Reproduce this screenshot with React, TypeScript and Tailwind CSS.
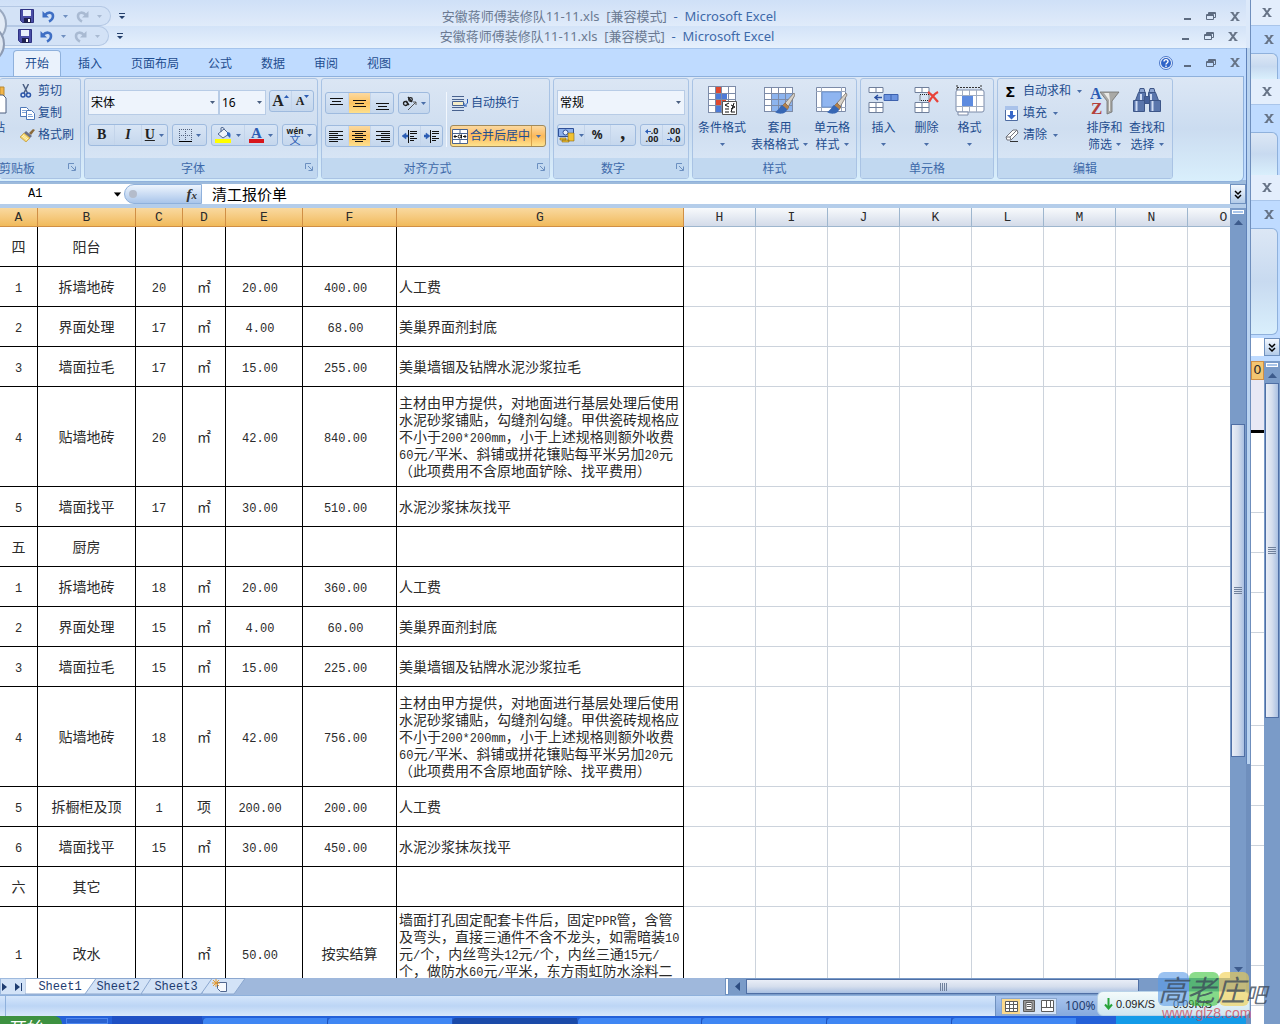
import React from 'react';

type Row = {
  no: string;
  name: string;
  qty?: string;
  unit?: string;
  price?: string;
  total?: string;
  note?: string[];
  height?: string;
};

const TILE_NOTE = [
  '主材由甲方提供，对地面进行基层处理后使用',
  '水泥砂浆铺贴，勾缝剂勾缝。甲供瓷砖规格应',
  '不小于200*200mm，小于上述规格则额外收费',
  '60元/平米、斜铺或拼花镶贴每平米另加20元',
  '（此项费用不含原地面铲除、找平费用）',
];

const ROWS: Row[] = [
  { no: '四', name: '阳台' },
  { no: '1', name: '拆墙地砖', qty: '20', unit: '㎡', price: '20.00', total: '400.00', note: ['人工费'] },
  { no: '2', name: '界面处理', qty: '17', unit: '㎡', price: '4.00', total: '68.00', note: ['美巢界面剂封底'] },
  { no: '3', name: '墙面拉毛', qty: '17', unit: '㎡', price: '15.00', total: '255.00', note: ['美巢墙锢及钻牌水泥沙浆拉毛'] },
  { no: '4', name: '贴墙地砖', qty: '20', unit: '㎡', price: '42.00', total: '840.00', note: TILE_NOTE, height: 'h-[100px]' },
  { no: '5', name: '墙面找平', qty: '17', unit: '㎡', price: '30.00', total: '510.00', note: ['水泥沙浆抹灰找平'] },
  { no: '五', name: '厨房' },
  { no: '1', name: '拆墙地砖', qty: '18', unit: '㎡', price: '20.00', total: '360.00', note: ['人工费'] },
  { no: '2', name: '界面处理', qty: '15', unit: '㎡', price: '4.00', total: '60.00', note: ['美巢界面剂封底'] },
  { no: '3', name: '墙面拉毛', qty: '15', unit: '㎡', price: '15.00', total: '225.00', note: ['美巢墙锢及钻牌水泥沙浆拉毛'] },
  { no: '4', name: '贴墙地砖', qty: '18', unit: '㎡', price: '42.00', total: '756.00', note: TILE_NOTE, height: 'h-[100px]' },
  { no: '5', name: '拆橱柜及顶', qty: '1', unit: '项', price: '200.00', total: '200.00', note: ['人工费'] },
  { no: '6', name: '墙面找平', qty: '15', unit: '㎡', price: '30.00', total: '450.00', note: ['水泥沙浆抹灰找平'] },
  { no: '六', name: '其它' },
  {
    no: '1',
    name: '改水',
    unit: '㎡',
    price: '50.00',
    total: '按实结算',
    note: [
      '墙面打孔固定配套卡件后，固定PPR管，含管',
      '及弯头，直接三通件不含不龙头，如需暗装10',
      '元/个，内丝弯头12元/个，内丝三通15元/',
      '个，做防水60元/平米，东方雨虹防水涂料二',
      '遍',
    ],
    height: 'h-[94px]',
  },
];

const COLUMNS = [
  { key: 'A', width: 'w-[38px]' },
  { key: 'B', width: 'w-[98px]' },
  { key: 'C', width: 'w-[47px]' },
  { key: 'D', width: 'w-[43px]' },
  { key: 'E', width: 'w-[77px]' },
  { key: 'F', width: 'w-[94px]' },
  { key: 'G', width: 'w-[287px]' },
  ...['H', 'I', 'J', 'K', 'L', 'M', 'N', 'O'].map(key => ({ key, width: 'w-[72px]' })),
];

const EMPTY_COLUMNS = COLUMNS.slice(7);

// ASCII runs use a narrow monospace so they take half a Chinese character each
const Mixed: React.FC<{ text?: string }> = ({ text = '' }) => (
  <>
    {text.split(/([\x20-\x7e]+)/).map((part, i) =>
      i % 2 ? <span key={i} className="font-['Liberation_Mono',monospace] text-[12px] leading-none">{part}</span> : part
    )}
  </>
);

const Caret: React.FC<{ className?: string }> = ({ className = 'text-[#4a6ea8]' }) => (
  <svg className={`shrink-0 ${className}`} width="5" height="3" viewBox="0 0 5 3" fill="currentColor"><path d="M0 0h5L2.5 3z" /></svg>
);

/* ---------- title bars ---------- */

const SaveIcon = () => (
  <svg width="14" height="14" viewBox="0 0 14 14">
    <path d="M0.5 0.5h13v13h-11l-2-2z" fill="#4a4ea6" stroke="#2f3282" />
    <path d="M3 1h8v6H3z" fill="#e8effb" />
    <path d="M4 9h7v5H4z" fill="#1f2150" />
    <path d="M8 10h2v3H8z" fill="#fff" />
  </svg>
);

const UndoIcon: React.FC<{ className: string }> = ({ className }) => (
  <svg className={className} width="13" height="13" viewBox="0 0 13 13" fill="none" stroke="currentColor">
    <path d="M3 5C6 1.500 11 2 11 6c0 3-2 4.500-4 5.500" strokeWidth="2.600" />
    <path d="M0.500 1v6.500H7z" fill="currentColor" stroke="none" />
  </svg>
);

const CloseGlyph = () => (
  <svg width="10" height="9" viewBox="0 0 10 9" fill="none" stroke="#667386"><path d="M2 0.500l6 8M8 0.500l-6 8" strokeWidth="2" /><path d="M.5 .5h3M6.500 .5h3M.5 8.500h3M6.500 8.500h3" /></svg>
);

const WindowButtons = () => (
  <div className="flex items-center gap-3.5 text-[#5d6b80]">
    <button aria-label="最小化" className="pt-1.5"><svg width="9" height="4" viewBox="0 0 9 4"><path d="M1 1h7v2H1z" fill="currentColor" /></svg></button>
    <button aria-label="还原">
      <svg width="10" height="8" viewBox="0 0 10 8" fill="none" stroke="currentColor"><path d="M2.500 2V.5h7v5H8M0.500 2.500h7v5h-7zM0.500 3.500h7M2.500 1.500h7" /></svg>
    </button>
    <button aria-label="关闭"><CloseGlyph /></button>
  </div>
);

const TitleBar: React.FC<{ className: string; shift?: string }> = ({ className, shift = '' }) => (
  <header className={`grid shrink-0 grid-cols-[1fr_auto_1fr] items-center ${className}`}>
    <div className="flex h-[20px] items-center gap-2">
      <div className={`flex h-full items-center rounded-r-full border border-l-0 border-[#b4c8e4] bg-[#d3e2f6] pl-5 ${shift || 'w-[111px]'}`}>
        <button aria-label="保存"><SaveIcon /></button>
        <button aria-label="撤消" className="ml-2"><UndoIcon className="text-[#3f6fc4]" /></button>
        <Caret className="ml-2 text-[#6f8fc0]" />
        <button aria-label="恢复" className="ml-2"><UndoIcon className="-scale-x-100 text-[#a9bad2]" /></button>
        <Caret className="ml-2 text-[#a9bad2]" />
      </div>
      <button aria-label="自定义快速访问工具栏">
        <svg width="6" height="7" viewBox="0 0 6 7" fill="#243f6b"><path d="M0 0h6v1H0zM0 3h6L3 6z" /></svg>
      </button>
    </div>
    <h1 className="whitespace-pre pr-7 text-[13px] text-[#6b7a92]">
      安徽蒋师傅装修队11-11.xls  [兼容模式] <span className="text-[#3e6aaa]"> -  Microsoft Excel</span>
    </h1>
    <div className="flex justify-end pr-1.5"><WindowButtons /></div>
  </header>
);

/* ---------- ribbon ---------- */

const Group: React.FC<{ label: string; className: string; labelClass?: string; launcher?: boolean; children: React.ReactNode }> = ({ label, className, labelClass = '', launcher, children }) => (
  <section className={`flex h-[101px] shrink-0 flex-col overflow-hidden rounded-[3px] border border-[#a9c3e4] bg-linear-to-b from-[#dbe6f4] via-[#cfdef0] to-[#dce9f8] ${className}`}>
    <div className="min-h-0 flex-1">{children}</div>
    <div className="flex h-5 items-center bg-[#c1d8f0] px-1 pt-px text-[#3e6aaa]">
      <h2 className={`flex-1 whitespace-nowrap ${labelClass || 'text-center'}`}>{label}</h2>
      {launcher && (
        <button aria-label={`${label}设置`} className="-ml-2 pb-1">
          <svg width="8" height="8" viewBox="0 0 8 8" fill="none" stroke="#6b8fc0"><path d="M0.500 6V.5H6M3 3l4 4M7.500 3.500v4h-4" /></svg>
        </button>
      )}
    </div>
  </section>
);

const ButtonSet: React.FC<{ className: string; children: React.ReactNode }> = ({ className, children }) => (
  <div className={`flex h-[22px] shrink-0 items-stretch divide-x divide-[#c3d4ea] rounded-[3px] border border-[#9ebade] bg-linear-to-b from-[#d8e5f5] to-[#c5d7ed] ${className}`}>{children}</div>
);

const Tool: React.FC<{ label: string; active?: boolean; arrow?: boolean; children: React.ReactNode }> = ({ label, active, arrow, children }) => (
  <button aria-label={label} className={`flex flex-1 items-center justify-center gap-1 ${active ? 'bg-linear-to-b from-[#fbd9a0] via-[#fcc35f] to-[#fde08e]' : ''}`}>
    {children}
    {arrow && <Caret />}
  </button>
);

const Combo: React.FC<{ label: string; value: string; className: string }> = ({ label, value, className }) => (
  <div className={`relative h-[25px] shrink-0 ${className}`}>
    <select aria-label={label} className="h-full w-full appearance-none border border-[#b8cce6] bg-[#eef4fc] pl-[2px] text-[12px] text-black">
      <option>{value}</option>
    </select>
    <Caret className="pointer-events-none absolute right-1 top-[11px] text-[#4a5f80]" />
  </div>
);

const Lines: React.FC<{ d: string; arrow?: string }> = ({ d, arrow }) => (
  <svg width="15" height="13" viewBox="0 0 15 13" fill="none" stroke="#111">
    <path d={d} />
    {arrow && <path d={arrow} fill="#2b5cb4" stroke="#2b5cb4" strokeWidth=".5" />}
  </svg>
);

const SmallCommand: React.FC<{ label: string; arrow?: boolean; children: React.ReactNode }> = ({ label, arrow, children }) => (
  <button className="flex h-[22px] items-center whitespace-nowrap">
    <span className="flex w-[18px] items-center">{children}</span>
    {label}
    {arrow && <Caret className="ml-1.5 text-[#4a6ea8]" />}
  </button>
);

const BigCommand: React.FC<{ lines: string[]; className: string; children: React.ReactNode }> = ({ lines, className, children }) => (
  <button className={`flex flex-col items-center whitespace-nowrap leading-[17px] ${className}`}>
    <span className="flex h-[34px] items-center">{children}</span>
    <span className="mt-[2px]">{lines[0]}</span>
    <span className="flex h-[17px] items-center gap-1">{lines[1]}<Caret /></span>
  </button>
);

const CutIcon = () => (
  <svg width="12" height="14" viewBox="0 0 12 14" fill="none">
    <path d="M3 0l4.500 9M8.500 0L4 9" stroke="#4d6185" strokeWidth="1.500" />
    <circle cx="3" cy="11" r="2" stroke="#2b55a8" strokeWidth="1.500" />
    <circle cx="8.500" cy="11" r="2" stroke="#2b55a8" strokeWidth="1.500" />
  </svg>
);

const CopyIcon = () => (
  <svg width="15" height="13" viewBox="0 0 15 13" fill="#fff" stroke="#4d78b8">
    <path d="M0.500 0.500h6l2 2v7h-8z" /><path d="M6.500 3.500h5l3 3v6h-8z" /><path d="M2 3.500h4M2 5.500h4M8 7.500h4M8 9.500h5" stroke="#7fa5d8" />
  </svg>
);

const BrushIcon = () => (
  <svg width="16" height="13" viewBox="0 0 16 13">
    <path d="M9 4l4-4 2 1-4 5z" fill="#8a6a3a" /><path d="M6 2l6 5-2 2-6-5z" fill="#6a7088" /><path d="M4 4l6 5-4 4-6-5z" fill="#f3d56c" stroke="#b88a28" strokeWidth=".6" />
    <path d="M3 6l5 4M2 7l5 4" stroke="#fff6c8" />
  </svg>
);

const PaintBrush: React.FC = () => (
  <g>
    <path d="M30 7L21 17l3 4 7-12z" fill="#d8d2c8" stroke="#77706a" strokeWidth=".8" />
    <path d="M21 17l4 4-2 3-5-4z" fill="#b5824a" stroke="#7d5528" strokeWidth=".5" />
    <path d="M18 19c-2 1-2 4-7 7 4 3 12 2 12-3z" fill="#3767b4" />
  </g>
);

const ConditionalIcon = () => (
  <svg width="31" height="30" viewBox="0 0 31 30">
    <path d="M1 1h27v26H1z" fill="#fff" />
    <path d="M8 1h6v7H8zM8 14h11v6H8z" fill="#e0492f" /><path d="M8 8h12v6H8zM8 20h6v7H8z" fill="#4d7bd8" />
    <path d="M1.500 1v26M8.500 1v26M14.500 1v26M21.500 1v26M28.500 1v26M1 1.500h27M1 8.500h27M1 14.500h27M1 20.500h27M1 27.500h27" stroke="#7c8ba8" />
    <path d="M15.500 16.500h14v13h-14z" fill="#fff" stroke="#555" />
    <path d="M22 18l-4 2 4 2M18 24h4M24 20l4 2-4 2M24 27h4M18 27h4M27 18l-3 9" fill="none" stroke="#111" />
  </svg>
);

const TableFormatIcon = () => (
  <svg width="31" height="29" viewBox="0 0 31 29">
    <path d="M1 1h28v25H1z" fill="#fff" /><path d="M8 8h21v18H8z" fill="#8db4ee" />
    <path d="M.5 1v25M7.500 1v25M14.500 1v25M21.500 1v25M28.500 1v25M0 1.500h29M0 7.500h29M0 13.500h29M0 19.500h29M0 25.500h29" stroke="#7c8ba8" />
    <PaintBrush />
  </svg>
);

const CellStyleIcon = () => (
  <svg width="32" height="29" viewBox="0 0 32 29">
    <path d="M.5 1.500h29v24H.5z" fill="#fff" stroke="#7c8ba8" /><path d="M5.500 1v24M25.500 1v24M0 5.500h30M0 21.500h30" stroke="#9aa7bd" />
    <path d="M6 6h19v15H6z" fill="#8fb5f0" stroke="#6f95d0" />
    <PaintBrush />
  </svg>
);

const InsertIcon = () => (
  <svg width="31" height="28" viewBox="0 0 31 28" fill="#fff" stroke="#6f7f9b">
    <path d="M1 1.500h14v5H1zM1 16.500h14v10H1zM8 1.500v5M8 16.500v10M1 21.500h14" />
    <path d="M16 8.500h14v6H16zM23 8.500v6" fill="#6c94e0" stroke="#3d62ae" />
    <path d="M7 11.500h7M10 9l-3 2.500L10 14" fill="none" stroke="#2b4fa0" strokeWidth="1.500" />
  </svg>
);

const DeleteIcon = () => (
  <svg width="26" height="28" viewBox="0 0 26 28" fill="#fff" stroke="#6f7f9b">
    <path d="M1 1.500h14v5H1zM1 16.500h14v10H1zM8 1.500v5M8 16.500v10M1 21.500h14" />
    <path d="M6 8.500h9v6H6z" fill="none" strokeDasharray="1 1" stroke="#222" />
    <path d="M14 6c3 2 7 6 10 10M24 6c-4 2-7 6-9 10" fill="none" stroke="#e8433a" strokeWidth="2.200" />
  </svg>
);

const FormatIcon = () => (
  <svg width="30" height="31" viewBox="0 0 30 31">
    <path d="M2 2.500h24M2 0v5M26 0v5" stroke="#333" strokeDasharray="2 1" />
    <rect x="1" y="5" width="28" height="22" rx="2" fill="#fff" stroke="#7c8ba8" />
    <path d="M7.500 5v22M14.500 5v22M21.500 5v22M1 10.500h28M1 21.500h28" stroke="#a2aec2" />
    <path d="M7 11h11v10H7z" fill="#5d8be0" /><path d="M3 27h10v3H3z" fill="#fff" stroke="#7c8ba8" />
  </svg>
);

const SortFilterIcon = () => (
  <svg width="30" height="29" viewBox="0 0 30 29">
    <path d="M10 6h19l-7 9v11l-5 2V15z" fill="#a9a9a6" stroke="#6f6f6c" strokeWidth=".8" /><path d="M14 7h5l1 7v11h-1V14z" fill="#e9e9e6" />
    <text x="0" y="13" fontFamily="Liberation Serif, serif" fontWeight="bold" fontSize="16" fill="#2b5cb4">A</text>
    <text x="1" y="28" fontFamily="Liberation Serif, serif" fontWeight="bold" fontSize="17" fill="#b3403a">Z</text>
  </svg>
);

const BinocularsIcon = () => (
  <svg width="28" height="26" viewBox="0 0 28 26" fill="#5a76ac" stroke="#3d5688">
    <path d="M5.500 5.500h7v8h-10zM15.500 5.500h7l3 8h-10z" />
    <path d="M7 1.500h4l1 4H6zM17 1.500h4l1 4h-6z" fill="#8ea6d2" />
    <path d="M.5 13.500h11v11H.5zM16.500 13.500h11v11h-11z" /><path d="M11.500 9.500h5v7h-5z" fill="#44609a" />
    <path d="M3.500 14v10M19.500 14v10M8 7v6M18 7v6" stroke="#cfdcf4" strokeWidth="2" />
  </svg>
);

const MergeIcon = () => (
  <svg width="16" height="15" viewBox="0 0 16 15" fill="#fff" stroke="#48628f">
    <path d="M.5.5h15v14H.5zM0 4.500h16M0 10.500h16M8 0v4M8 11v4" />
    <path d="M2 7.500h3M11 7.500h3M3.500 6L2 7.500 3.500 9M12.500 6L14 7.500 12.500 9" fill="none" stroke="#111" />
    <circle cx="7.500" cy="7.500" r="1.500" fill="none" stroke="#111" /><path d="M9.500 5.500v4" stroke="#111" />
  </svg>
);

const BG = 'font-[\'Liberation_Serif\',serif] font-bold text-[#222]';

const Ribbon = () => (
  <div className="flex h-[108px] shrink-0 items-start border-b-4 border-[#9dbbdc] bg-[#bfdbff] pr-0.5">
    <div className="flex h-[106px] w-full gap-[3px] overflow-hidden rounded-br-md border border-l-0 border-[#8fb1dc] bg-linear-to-b from-[#dce7f5] via-[#cbdcf0] to-[#d9effc] pt-px">
      <Group label="剪贴板" className="w-[81px] border-l-0" labelClass="-ml-[5px] text-left" launcher>
        <div className="flex pt-px">
          <div className="flex h-14 w-[20px] flex-col justify-between pt-[6px]">
            <svg width="7" height="28" viewBox="0 0 7 28"><path d="M0 1h4v10H0z" fill="#f4b64a" stroke="#b98933" /><path d="M-2 9h5l3 3v15h-8z" fill="#fff" stroke="#4d5f80" /></svg>
            <span className="-ml-[7px] leading-4">贴</span>
          </div>
          <div className="flex flex-col">
            <SmallCommand label="剪切"><CutIcon /></SmallCommand>
            <SmallCommand label="复制"><CopyIcon /></SmallCommand>
            <SmallCommand label="格式刷"><BrushIcon /></SmallCommand>
          </div>
        </div>
      </Group>

      <Group label="字体" className="w-[234px]" labelClass="pr-4 text-center" launcher>
        <div className="flex flex-col gap-[9px] px-[3px] pt-[11px]">
          <div className="flex">
            <Combo label="字体" value="宋体" className="w-[131px]" />
            <Combo label="字号" value="16" className="w-[47px]" />
            <ButtonSet className="ml-[3px] w-[45px]">
              <Tool label="增大字号"><span className={`${BG} -mr-1 text-[16px]`}>A</span><Caret className="mb-2.5 rotate-180 text-[#2b5cb4]" /></Tool>
              <Tool label="减小字号"><span className={`${BG} -mr-1 text-[12px]`}>A</span><Caret className="mb-2.5 text-[#2b5cb4]" /></Tool>
            </ButtonSet>
          </div>
          <div className="flex gap-1">
            <ButtonSet className="w-[80px]">
              <Tool label="加粗"><span className={`${BG} text-[14px]`}>B</span></Tool>
              <Tool label="倾斜"><span className={`${BG} text-[14px] italic`}>I</span></Tool>
              <Tool label="下划线" arrow><span className={`${BG} text-[14px] underline`}>U</span></Tool>
            </ButtonSet>
            <ButtonSet className="w-[35px]">
              <Tool label="边框" arrow>
                <svg width="13" height="13" viewBox="0 0 13 13" fill="none" stroke="#52617d"><path d="M.5 0v12M6.500 0v12M12.500 0v12M0 .5h13M0 6.500h13" strokeDasharray="1 1" /><path d="M0 12.500h13" stroke="#000" /></svg>
              </Tool>
            </ButtonSet>
            <ButtonSet className="w-[67px]">
              <Tool label="填充颜色" arrow>
                <svg width="17" height="16" viewBox="0 0 17 16"><path d="M0 12h16v4H0z" fill="#ffff00" /><path d="M3 7l6-5 5 5-6 4z" fill="#eef3fb" stroke="#51678f" /><path d="M6 5V1c0-1 3-1 3 1" fill="none" stroke="#51678f" /><path d="M12 5c4 0 4 3 3 6l-3-3z" fill="#2f66c0" /></svg>
              </Tool>
              <Tool label="字体颜色" arrow>
                <span className="flex flex-col items-center border-b-4 border-[#d8161c] px-[2px] font-['Liberation_Serif',serif] text-[15px] font-bold leading-3 text-[#2b5cb4]">A</span>
              </Tool>
            </ButtonSet>
            <ButtonSet className="w-[35px]">
              <Tool label="拼音" arrow><span className="flex flex-col items-center leading-[9px]"><b className="text-[8px] text-[#222]">wén</b><span className="text-[11px] text-[#2b5cb4]">文</span></span></Tool>
            </ButtonSet>
          </div>
        </div>
      </Group>

      <Group label="对齐方式" className="w-[229px]" labelClass="pr-4 text-center" launcher>
        <div className="flex pt-[13px] pl-[3px]">
          <div className="flex flex-col gap-[11px] border-r border-[#f2f7fd] pr-[3px]">
            <div className="flex gap-1">
              <ButtonSet className="w-[69px]">
                <Tool label="顶端对齐"><Lines d="M1 1.500h13M3 4.500h9M1 7.500h13" /></Tool>
                <Tool label="垂直居中" active><Lines d="M1 3.500h13M3 6.500h9M1 9.500h13" /></Tool>
                <Tool label="底端对齐"><Lines d="M1 6.500h13M3 9.500h9M1 12.500h13" /></Tool>
              </ButtonSet>
              <ButtonSet className="w-[32px]">
                <Tool label="方向" arrow>
                  <svg width="15" height="15" viewBox="0 0 15 15" fill="none" stroke="#222" strokeWidth="1.300"><circle cx="3.500" cy="7.500" r="2" /><path d="M4 5l3 4M6 1l4 5" /><circle cx="8.500" cy="3.500" r="1.800" /><path d="M6 14l8-8M14 9V6h-3" stroke="#555" strokeWidth="1" /></svg>
                </Tool>
              </ButtonSet>
            </div>
            <div className="flex gap-1">
              <ButtonSet className="w-[69px]">
                <Tool label="文本左对齐"><Lines d="M0 1.500h14M0 3.500h9M0 5.500h14M0 7.500h9M0 9.500h14M0 11.500h9" /></Tool>
                <Tool label="居中" active><Lines d="M0 1.500h14M3 3.500h8M0 5.500h14M3 7.500h8M0 9.500h14M3 11.500h8" /></Tool>
                <Tool label="文本右对齐"><Lines d="M1 1.500h14M6 3.500h9M1 5.500h14M6 7.500h9M1 9.500h14M6 11.500h9" /></Tool>
              </ButtonSet>
              <ButtonSet className="w-[45px]">
                <Tool label="减少缩进量"><Lines d="M6.500 0v13M8 1.500h7M8 3.500h7M8 6.500h4M8 8.500h7M8 10.500h4" arrow="M0 6l4-3v2h2v2H4v2z" /></Tool>
                <Tool label="增加缩进量"><Lines d="M6.500 0v13M8 1.500h7M8 3.500h7M8 6.500h4M8 8.500h7M8 10.500h4" arrow="M6 6L2 3v2H0v2h2v2z" /></Tool>
              </ButtonSet>
            </div>
          </div>
          <div className="flex flex-col gap-[11px] pl-[3px]">
            <button className="flex h-[22px] items-center gap-[3px] pl-[2px]">
              <svg width="16" height="15" viewBox="0 0 16 15" fill="none" stroke="#48628f"><path d="M0 .5h12M0 3.500h12M0 11.500h12M0 14.500h12" /><path d="M.5 5.500h11v4H.5z" fill="#f5edc8" /><path d="M15.500 3v4l-3 3M12 7v3h3" stroke="#2b5cb4" /></svg>
              自动换行
            </button>
            <button className="flex h-[22px] w-[96px] items-center whitespace-nowrap rounded-[3px] border border-[#a08a5c] bg-linear-to-b from-[#fbd9a0] via-[#fcb95a] to-[#fde38e] pl-px">
              <MergeIcon />
              <span className="ml-[2px] mr-px">合并后居中</span>
              <span className="flex h-full flex-1 items-center justify-center border-l border-[#d8a24c]"><Caret /></span>
            </button>
          </div>
        </div>
      </Group>

      <Group label="数字" className="w-[136px]" labelClass="pr-4 text-center" launcher>
        <div className="flex flex-col gap-[9px] px-[3px] pt-[11px]">
          <Combo label="数字格式" value="常规" className="w-[128px]" />
          <div className="flex gap-1">
            <ButtonSet className="w-[79px]">
              <Tool label="会计数字格式" arrow>
                <svg width="17" height="16" viewBox="0 0 17 16"><path d="M.5 1.500h15v8H.5z" fill="#8db0ea" stroke="#2f5097" /><circle cx="7.500" cy="5.500" r="2.500" fill="#e8f0fc" stroke="#2f5097" /><path d="M2 11h6v2H2zM4 13h7v2H4zM10 6h6v8h-6z" fill="#f1c232" stroke="#8a6914" strokeWidth=".6" /></svg>
              </Tool>
              <Tool label="百分比样式"><span className="text-[12px] font-bold text-[#222]">%</span></Tool>
              <Tool label="千位分隔样式"><span className={`${BG} -mt-1.5 text-[20px]`}>,</span></Tool>
            </ButtonSet>
            <ButtonSet className="w-[45px]">
              <Tool label="增加小数位数">
                <span className="flex flex-col items-end text-[9px] font-bold leading-[8px] text-[#222]">
                  <span className="flex items-center"><svg width="6" height="5" viewBox="0 0 6 5" fill="#2b5cb4"><path d="M0 2.500L3 0v2h3v1H3v2z" /></svg>.0</span>
                  <span>.00</span>
                </span>
              </Tool>
              <Tool label="减少小数位数">
                <span className="flex flex-col items-end text-[9px] font-bold leading-[8px] text-[#222]">
                  <span>.00</span>
                  <span className="flex items-center"><svg width="6" height="5" viewBox="0 0 6 5" fill="#2b5cb4"><path d="M6 2.500L3 0v2H0v1h3v2z" /></svg>.0</span>
                </span>
              </Tool>
            </ButtonSet>
          </div>
        </div>
      </Group>

      <Group label="样式" className="w-[165px]">
        <div className="flex pt-1">
          <BigCommand lines={['条件格式', '']} className="w-[58px]"><ConditionalIcon /></BigCommand>
          <BigCommand lines={['套用', '表格格式']} className="w-[57px]"><TableFormatIcon /></BigCommand>
          <BigCommand lines={['单元格', '样式']} className="w-[48px]"><CellStyleIcon /></BigCommand>
        </div>
      </Group>

      <Group label="单元格" className="w-[134px]">
        <div className="flex pt-1 pl-px">
          <BigCommand lines={['插入', '']} className="w-[43px]"><InsertIcon /></BigCommand>
          <BigCommand lines={['删除', '']} className="w-[43px]"><DeleteIcon /></BigCommand>
          <BigCommand lines={['格式', '']} className="w-[43px]"><FormatIcon /></BigCommand>
        </div>
      </Group>

      <Group label="编辑" className="w-[176px]">
        <div className="flex pl-[7px]">
          <div className="flex w-[78px] flex-col pt-px">
            <SmallCommand label="自动求和" arrow><b className="pl-px text-[15px] text-black">Σ</b></SmallCommand>
            <SmallCommand label="填充" arrow>
              <svg width="13" height="15" viewBox="0 0 13 15"><path d="M.5.500h12v14H.5z" fill="#fff" stroke="#4d6aa0" /><path d="M0 0h13v4H0z" fill="#a9c2ea" /><path d="M5 5h3v4h3l-4.500 4.500L2 9h3z" fill="#3767c8" /></svg>
            </SmallCommand>
            <SmallCommand label="清除" arrow>
              <svg width="14" height="13" viewBox="0 0 14 13"><path d="M1 8l7-7h4l1 3-7 7H2z" fill="#fff" stroke="#70737c" /><path d="M1 8h4l1 3M5 8l7-7" fill="none" stroke="#70737c" /><path d="M5 12.500h8" stroke="#333" /></svg>
            </SmallCommand>
          </div>
          <div className="flex pt-1">
            <BigCommand lines={['排序和', '筛选']} className="w-[43px]"><SortFilterIcon /></BigCommand>
            <BigCommand lines={['查找和', '选择']} className="w-[42px]"><BinocularsIcon /></BigCommand>
          </div>
        </div>
      </Group>
    </div>
  </div>
);

const TABS = ['开始', '插入', '页面布局', '公式', '数据', '审阅', '视图'];

const TabRow = () => (
  <nav className="flex h-7 shrink-0 items-end justify-between border-t border-[#a5c4ec] bg-[#bfdbff]">
    <div className="flex gap-[5px] pl-[13px]">
      {TABS.map((tab, i) => (
        <button
          key={tab}
          className={`h-[26px] rounded-t-[4px] border border-b-0 px-[11px] ${i === 0 ? 'border-[#8fb1dc] bg-[#eaf2fc]' : 'border-transparent'}`}
        >
          {tab}
        </button>
      ))}
    </div>
    <div className="flex h-full items-center gap-2.5 pr-1.5">
      <button aria-label="帮助">
        <svg width="14" height="14" viewBox="0 0 14 14" fill="none"><circle cx="7" cy="7" r="6.500" fill="#e7f0fd" stroke="#4d78c8" /><circle cx="7" cy="7" r="5" fill="#2f64c8" /><path d="M5 5.500c0-2.500 4-2.500 4 0C9 7 7 7 7 8.500M7 9.500v1.500" stroke="#fff" strokeWidth="1.400" /></svg>
      </button>
      <WindowButtons />
    </div>
  </nav>
);

const ExpandButton = () => (
  <button aria-label="展开" className="flex w-4 shrink-0 items-center justify-center border border-[#6f91bf] bg-linear-to-b from-[#f3f8fe] to-[#b3cbe8]">
    <svg width="8" height="9" viewBox="0 0 8 9" fill="none" stroke="#000" strokeWidth="1.500"><path d="M1 1l3 3 3-3M1 5l3 3 3-3" /></svg>
  </button>
);

const FormulaBar = () => (
  <div className="flex h-6 shrink-0 border-b-4 border-[#b4cdea] bg-white">
    <label className="flex w-[124px] items-center justify-between pr-1">
      <input aria-label="名称框" defaultValue="A1" className="w-24 pl-7 font-['Liberation_Mono',monospace] text-[12px] text-black outline-none" />
      <Caret className="scale-150 text-black" />
    </label>
    <div className="flex w-[78px] items-center justify-between rounded-l-full border border-[#8fb1dc] bg-linear-to-b from-[#eef5fd] to-[#a9c5ea] pr-1">
      <span className="ml-1 size-2 rounded-full bg-[#b4bccb]" />
      <button aria-label="插入函数" className="font-['Liberation_Serif',serif] text-[15px] italic leading-4 text-[#333]"><b>f</b><span className="text-[11px] font-bold">x</span></button>
    </div>
    <input aria-label="编辑栏" defaultValue="清工报价单" className="min-w-0 flex-1 pl-2.5 text-[15px] leading-5 text-black outline-none" />
    <ExpandButton />
  </div>
);

/* ---------- sheet ---------- */

const Grip: React.FC<{ className?: string }> = ({ className = '' }) => (
  <svg className={className} width="8" height="8" viewBox="0 0 8 8" stroke="#70819c"><path d="M0 .5h8M0 2.500h8M0 4.500h8M0 6.500h8" /></svg>
);

const UpArrow = () => (
  <svg className="shrink-0" width="9" height="5" viewBox="0 0 9 5" fill="#3d5b8c"><path d="M0 5h9L4.500 0z" /></svg>
);

const THUMB = 'flex items-center justify-center border border-[#4f6fa5] from-[#e9eef7] via-[#d5deed] to-[#a9c0e2]';

const VerticalScroll = () => (
  <div className="flex w-4 shrink-0 flex-col items-center bg-[#7a9bc8] pt-0.5">
    <div className="h-1 w-3 shrink-0 border border-white bg-[#a9c5ea]" />
    <div className="flex h-4 shrink-0 items-center"><UpArrow /></div>
    <div className="flex-[195]" />
    <div className={`${THUMB} w-3.5 flex-[333] bg-linear-to-r`}><Grip /></div>
    <div className="flex-[206]" />
    <div className="flex h-4 shrink-0 rotate-180 items-center"><UpArrow /></div>
  </div>
);

const cell = 'border-r border-b border-black p-0';

const Sheet = () => (
  <div className="flex min-h-0 flex-1">
    <div className="min-w-0 flex-1 overflow-hidden bg-white">
      <table className="w-[1260px] table-fixed border-separate border-spacing-0 whitespace-nowrap text-center text-[14px] leading-[17px] text-[#2b2b2b]">
        <colgroup>
          {COLUMNS.map(c => <col key={c.key} className={c.width} />)}
        </colgroup>
        <thead>
          <tr className="h-[19px]">
            {COLUMNS.map((c, i) => (
              <th
                key={c.key}
                className={`border-r border-b p-0 font-['Liberation_Mono',monospace] text-[13px] font-normal text-[#2b2b2b] ${
                  i < 7 ? 'border-[#d08f45] bg-linear-to-b from-[#f9d99f] to-[#f1ba5a]' : 'border-[#9eb6ce] bg-linear-to-b from-[#f8fafc] to-[#d3dbe9]'
                }`}
              >
                {c.key}
              </th>
            ))}
          </tr>
        </thead>
        <tbody>
          {ROWS.map((row, i) => (
            <tr key={i} className={row.height ?? 'h-10'}>
              <td className={cell}><Mixed text={row.no} /></td>
              <td className={cell}>{row.name}</td>
              <td className={cell}><Mixed text={row.qty} /></td>
              <td className={cell}>{row.unit}</td>
              <td className={`${cell} pr-2`}><Mixed text={row.price} /></td>
              <td className={`${cell} ${row.total === '按实结算' ? '' : 'pr-2'}`}><Mixed text={row.total} /></td>
              <td className={`${cell} pl-0.5 text-left`}>
                {row.note?.map(line => <div key={line} className="h-[17px]"><Mixed text={line} /></div>)}
              </td>
              {EMPTY_COLUMNS.map(c => <td key={c.key} className="border-r border-b border-[#ccd3dc] p-0" />)}
            </tr>
          ))}
        </tbody>
      </table>
    </div>
    <VerticalScroll />
  </div>
);

const SheetTab: React.FC<{ label: string; active?: boolean }> = ({ label, active }) => (
  <button className={`relative h-full w-[58px] font-['Liberation_Mono',monospace] text-[12px] text-[#1e3c70] ${active ? 'z-10' : ''}`}>
    <svg className="absolute -left-1 top-0" width="72" height="17" viewBox="0 0 72 17"><path d={active ? 'M0 16V.5h71L60 16z' : 'M0 16L10 .5h61L60 16z'} fill={active ? '#fff' : '#d3e3f7'} stroke="#8ba7cf" /></svg>
    <span className="relative pl-1">{label}</span>
  </button>
);

const SheetTabs = () => (
  <div className="flex h-[17px] shrink-0 bg-[#9fb8dc]">
    <div className="flex flex-1">
      <div className="flex w-[29px] items-center gap-2 border border-[#9ebade] bg-[#d3e3f7] pl-px">
        <button aria-label="下一个工作表"><svg width="5" height="8" viewBox="0 0 5 8" fill="#1e3c70"><path d="M0 0l5 4-5 4z" /></svg></button>
        <button aria-label="最后一个工作表"><svg width="7" height="8" viewBox="0 0 7 8" fill="#1e3c70"><path d="M0 0l5 4-5 4zM6 0h1v8H6z" /></svg></button>
      </div>
      <div className="flex">
        <SheetTab label="Sheet1" active />
        <SheetTab label="Sheet2" />
        <SheetTab label="Sheet3" />
        <button aria-label="插入工作表" className="w-11">
          <svg width="44" height="17" viewBox="0 0 44 17"><path d="M-4 16L6 .5h36L31 16z" fill="#d3e3f7" stroke="#8ba7cf" /><path d="M14.500 4.500h9v9h-6l-3-3z" fill="#f6f9fd" stroke="#51678f" /><path d="M13 1v8M9 5h8M10 2l6 6M16 2l-6 6" stroke="#e79a2c" /></svg>
        </button>
      </div>
    </div>
    <div className="flex w-[521px] items-center bg-[#7a9bc8]">
      <div className="h-full w-1 border border-[#6f91bf] bg-white" />
      <svg className="mx-1.5" width="5" height="9" viewBox="0 0 5 9" fill="#2d4c80"><path d="M5 0v9L0 4.500z" /></svg>
      <div className={`${THUMB} h-[15px] w-[393px] bg-linear-to-b`}><Grip className="rotate-90" /></div>
    </div>
  </div>
);

const ViewIcons = () => (
  <div className="flex h-[17px] w-[56px] border border-[#8ba7cf] bg-[#d3e3f7]">
    <button aria-label="普通" className="flex flex-1 items-center justify-center bg-[#fbd98c]"><svg width="13" height="11" viewBox="0 0 13 11" fill="#fff" stroke="#5c5c5c"><path d="M.5.5h12v10H.5zM4.500 0v11M8.500 0v11M0 3.500h13M0 7.500h13" /></svg></button>
    <button aria-label="页面布局" className="flex flex-1 items-center justify-center"><svg width="12" height="12" viewBox="0 0 12 12" fill="#fff" stroke="#5c5c5c"><path d="M.5.5h11v11H.5z" fill="#9a9a9a" /><path d="M3 2.500h6v7H3zM4 4.500h4M4 6.500h4" /></svg></button>
    <button aria-label="分页预览" className="flex flex-1 items-center justify-center"><svg width="13" height="12" viewBox="0 0 13 12" fill="#fff" stroke="#5c5c5c"><path d="M.5.5h12v11H.5zM5.500 0v7M9.500 0v7M0 7.500h12" /></svg></button>
  </div>
);

const StatusBar = () => (
  <div className="flex h-[21px] shrink-0 items-center border-t border-[#8fb1dc] bg-linear-to-b from-[#d5e6fb] via-[#bcd5f5] to-[#d8e8fb] pl-[5px]">
    <div className="h-full flex-1 border-l border-[#8fb1dc]" />
    <div className="flex h-full w-[251px] items-center gap-2 border-l border-[#6f91bf] bg-linear-to-b from-[#a9c5ee] to-[#86a9dd] pl-[5px] text-[#1e3c70]">
      <ViewIcons />
      <span>100%</span>
    </div>
  </div>
);

const Taskbar = () => (
  <div className="flex h-2 shrink-0 overflow-hidden bg-[#2460d8]">
    <button className="h-6 w-[62px] rounded-tr-lg bg-[#3d9140] pl-1.5 text-left text-[18px] italic leading-6 text-white">开始</button>
    <div className="mx-1 mt-0.5 w-[42px] border border-[#4d86ee] bg-[#2a62d0]" />
    <div className="w-[90px] bg-[#1f50c4]" />
    {[0, 1, 2, 3, 4, 5, 6].map(i => (
      <div key={i} className={`mt-0.5 flex-1 rounded-tl-sm border-l border-[#2151b8] ${i === 2 ? 'bg-[#1b4aa8]' : 'bg-[#3f86f3]'}`} />
    ))}
    <div className="ml-10 w-[130px] bg-[#149be8]" />
  </div>
);

/* ---------- windows stacked behind the front one ---------- */

const GhostTop: React.FC<{ panel: string }> = ({ panel }) => (
  <>
    <div className="flex h-[26px] items-center justify-end border-b border-[#a9c5ea] bg-[#e3eefc] pr-2"><CloseGlyph /></div>
    <div className="flex h-[27px] items-center justify-end bg-[#bfdbff] pr-1.5"><CloseGlyph /></div>
    <div className={`mr-0.5 rounded-tr-md border-t border-r border-[#8fb1dc] bg-linear-to-b from-[#dce7f5] via-[#c8daf0] to-[#d9effc] ${panel}`} />
  </>
);

const BackWindows = () => (
  <aside className="flex w-[29px] shrink-0 flex-col overflow-hidden bg-[#bfdbff]">
    <GhostTop panel="h-[26px]" />
    <GhostTop panel="h-[43px]" />
    <GhostTop panel="h-[107px] rounded-br-md border-b" />
    <div className="mt-[3px] flex h-[18px] shrink-0 bg-white"><div className="flex-1" /><ExpandButton /></div>
    <div className="mt-[5px] flex min-h-0 flex-1">
      <div className="flex min-w-0 flex-1 flex-col bg-white">
        <div className="h-[19px] border border-[#d08f45] bg-[#f4c671] text-center font-['Liberation_Mono',monospace] text-[13px] leading-[18px] text-[#2b2b2b]">O</div>
        <div className="h-[53px] border-b-3 border-black bg-[#e8e8f5]" />
        <div className="h-10" />
        {['h-10', 'h-10', 'h-10', 'h-10', 'h-[93px]', 'h-10', 'h-10', 'h-10', 'h-[120px]', 'h-10'].map((h, i) => (
          <div key={i} className={`${h} shrink-0 border-b border-[#ccd3dc]`} />
        ))}
      </div>
      <div className="flex w-4 flex-col items-center bg-[#7a9bc8] pt-0.5">
        <div className="h-1 w-3 shrink-0 border border-white bg-[#a9c5ea]" />
        <div className="flex h-4 shrink-0 items-center"><UpArrow /></div>
        <div className={`${THUMB} w-3.5 flex-[334] bg-linear-to-r`}><Grip /></div>
        <div className="flex-[306]" />
      </div>
    </div>
  </aside>
);

const NetSpeed = () => (
  <div className="absolute bottom-2 right-[30px] flex h-[25px] w-[153px] items-center rounded-md border border-[#b9d3e8] bg-linear-to-b from-[#f4fbfb] to-[#cfe6f0] pl-1.5 font-['Liberation_Sans',sans-serif] text-[11px] text-[#222]">
    <svg width="9" height="12" viewBox="0 0 9 12" fill="none" stroke="#27a43a" strokeWidth="2"><path d="M4.500 0v10M1 6.500l3.500 4L8 6.500" /></svg>
    <span className="ml-[3px] w-[57px]">0.09K/S</span>
    <span>0.09K/S</span>
  </div>
);

const Watermark = () => (
  <div className="pointer-events-none absolute right-[6px] bottom-0 h-[52px] w-[116px]">
    <div className="flex opacity-60">
      <span className="h-[34px] w-[31px] rounded-md bg-[#5a9be8]" />
      <span className="h-[34px] w-[30px] rounded-md bg-[#3fc53f]" />
      <span className="h-[34px] w-[30px] rounded-md bg-[#f2cf4a]" />
    </div>
    <div className="absolute top-0 left-0 flex items-end whitespace-nowrap text-[29px] italic leading-9 text-[#3c4a5a]/80">
      高老庄<span className="text-[22px] leading-7">吧</span>
    </div>
    <span className="absolute bottom-[3px] left-1 font-['Liberation_Sans',sans-serif] text-[14px] leading-4 text-[#cf4a5c]/80">www.glz8.com</span>
  </div>
);

// Office buttons of both title bars, mostly past the left edge
const OfficeButtons = () => (
  <div className="pointer-events-none absolute top-0 left-0 h-[70px] w-3 overflow-hidden">
    <div className="absolute top-1 -left-[33px] size-10 rounded-full border-2 border-[#9aa9c0] bg-[#e3ebf6]" />
    <div className="absolute top-6 -left-[35px] size-10 rounded-full border-2 border-[#8d9bb3] bg-[#dfe7f2]" />
  </div>
);

const App: React.FC = () => (
  <div className="relative flex h-screen w-full overflow-hidden bg-[#bfdbff] font-['Noto_Sans','Noto_Sans_CJK_SC',sans-serif] text-[12px] leading-4 text-[#1e4d8f]">
    <main className="flex min-w-0 flex-1 flex-col">
      <TitleBar className="h-[26px] bg-linear-to-b from-[#cfe0f7] to-[#e0ebfa] pt-1.5" />
      <TitleBar className="-ml-0.5 h-[22px] bg-linear-to-b from-[#d3e3f8] to-[#e6f0fc] pr-0.5 pb-0.5" />
      <TabRow />
      <Ribbon />
      <FormulaBar />
      <Sheet />
      <SheetTabs />
      <StatusBar />
      <Taskbar />
    </main>
    <div className="flex w-[5px] shrink-0 flex-col border-r border-[#6f8fbd]">
      <div className="h-12 bg-[#dce9fa]" />
      <div className="flex-1 border-l border-[#5f82b8] bg-[#b9d3f0]" />
      <div className="h-[260px] bg-[#6f8fbd]" />
    </div>
    <BackWindows />
    <OfficeButtons />
    <NetSpeed />
    <Watermark />
  </div>
);

export default App;
